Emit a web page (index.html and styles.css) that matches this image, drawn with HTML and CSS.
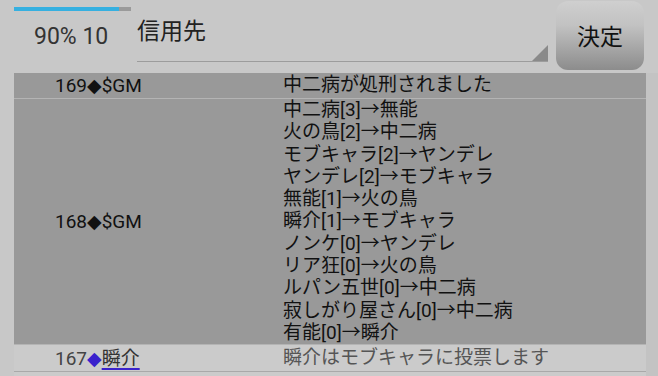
FILE: index.html
```html
<!DOCTYPE html>
<html lang="ja">
<head>
<meta charset="utf-8">
<link rel="stylesheet" href="styles.css">
</head>
<body>
<div class="screen">
  <div class="header">
    <div class="status">
      <div class="progress"><div class="progress-fill" style="width:90%"></div></div>
      <div class="stat">90% 10</div>
    </div>
    <div class="spinner">信用先</div>
    <div class="button">決定</div>
  </div>
  <div class="body">
    <div class="list">
      <div class="row dark">
        <div class="who">169<span class="dia">◆</span>$GM</div>
        <div class="msg">中二病が処刑されました</div>
      </div>
      <div class="row dark">
        <div class="who">168<span class="dia">◆</span>$GM</div>
        <div class="msg">中二病[3]→無能<br>火の鳥[2]→中二病<br>モブキャラ[2]→ヤンデレ<br>ヤンデレ[2]→モブキャラ<br>無能[1]→火の鳥<br>瞬介[1]→モブキャラ<br>ノンケ[0]→ヤンデレ<br>リア狂[0]→火の鳥<br>ルパン五世[0]→中二病<br>寂しがり屋さん[0]→中二病<br>有能[0]→瞬介</div>
      </div>
      <div class="row light">
        <div class="who"><span class="num">167</span><span class="dia blue">◆</span><span class="name">瞬介</span></div>
        <div class="msg">瞬介はモブキャラに投票します</div>
      </div>
      <div class="row light">
        <div class="who"></div>
        <div class="msg"></div>
      </div>
    </div>
    <div class="track"></div>
  </div>
</div>
</body>
</html>
```
FILE: styles.css
```css
html, body {
  margin: 0;
  padding: 0;
}
body {
  background: #c8c8c8;
  font-family: Roboto, "Noto Sans CJK JP", sans-serif;
  overflow: hidden;
}
.screen {
  width: 658px;
  height: 376px;
  overflow: hidden;
  display: flex;
  flex-direction: column;
}
.header {
  display: flex;
  height: 72px;
  flex: none;
}
.status {
  width: 123px;
  padding-left: 14px;
  padding-top: 7px;
}
.progress {
  width: 117px;
  height: 4px;
  background: #9a9a9a;
}
.progress-fill {
  height: 4px;
  background: #36b0e0;
}
.stat {
  margin-top: 12px;
  padding-left: 20px;
  font-size: 23px;
  line-height: 28px;
  color: #333;
}
.spinner {
  position: relative;
  width: 411px;
  border-bottom: 1px solid #9c9c9c;
  font-size: 23px;
  line-height: 28px;
  padding-top: 18px;
  box-sizing: border-box;
  height: 62px;
  color: #222;
}
.spinner::after {
  content: "";
  position: absolute;
  right: 0;
  bottom: 0;
  width: 0;
  height: 0;
  border-style: solid;
  border-width: 0 0 16px 16px;
  border-color: transparent transparent #8a8a8a transparent;
}
.button {
  margin-left: 8px;
  margin-top: 1px;
  width: 88px;
  height: 69px;
  border-radius: 12px;
  background: linear-gradient(#cfcfcf, #c2c2c2 35%, #8c8c8c);
  display: flex;
  align-items: center;
  justify-content: center;
  font-size: 23px;
  color: #111;
  padding-bottom: 1px;
  box-sizing: border-box;
}
.body {
  display: flex;
  flex: 1;
  padding-top: 1px;
}
.list {
  margin-left: 14px;
  width: 632px;
  display: flex;
  flex-direction: column;
}
.track {
  width: 12px;
  background: #c3c3c3;
}
.row {
  display: flex;
  align-items: center;
  font-size: 19px;
  line-height: 22.3px;
  flex: none;
}
.row.dark {
  background: #999999;
  color: #111;
  border-bottom: 1px solid #b4b4b4;
}
.row.dark:first-child {
  height: 25px;
}
.row.light {
  background: #cbcbcb;
  color: #555;
  height: 26px;
  border-bottom: 1px solid #a9a9a9;
}
.who {
  width: 228px;
  padding-left: 41px;
  white-space: nowrap;
}
.msg {
  white-space: nowrap;
}
.dia {
  font-size: 19px;
  font-family: "DejaVu Sans", sans-serif;
}
.num {
  color: #444;
}
.dia.blue {
  color: #3a22cc;
}
.name {
  color: #333;
  text-decoration: underline;
  text-decoration-color: #3a22cc;
  text-decoration-thickness: 2px;
  text-underline-offset: 3px;
}
```
